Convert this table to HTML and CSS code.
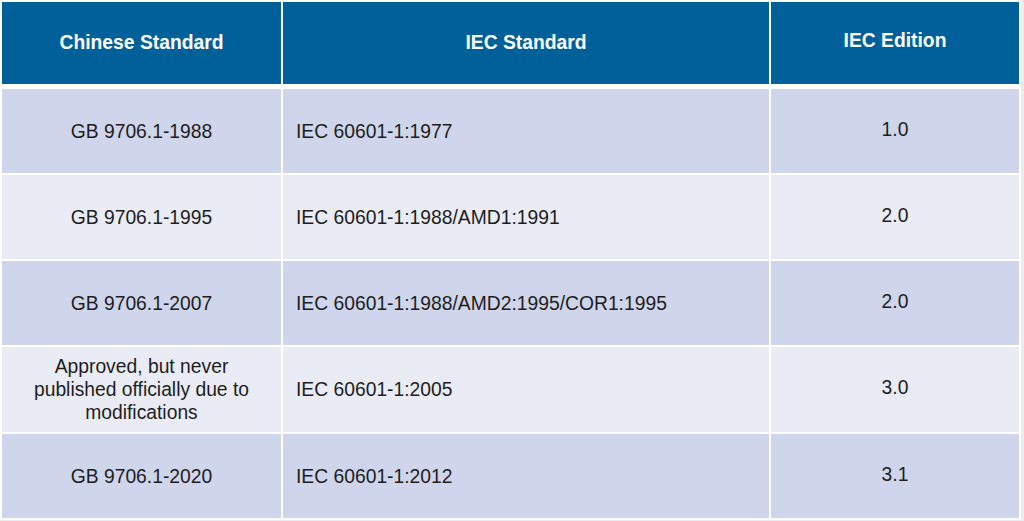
FILE: index.html
```html
<!DOCTYPE html>
<html>
<head>
<meta charset="utf-8">
<link rel="stylesheet" href="styles.css">
</head>
<body>
<div class="table">
  <div class="row head">
    <div class="cell c1">Chinese Standard</div>
    <div class="cell c2">IEC Standard</div>
    <div class="cell c3">IEC Edition</div>
  </div>
  <div class="body">
    <div class="row odd">
      <div class="cell c1">GB 9706.1-1988</div>
      <div class="cell c2">IEC 60601-1:1977</div>
      <div class="cell c3">1.0</div>
    </div>
    <div class="row even">
      <div class="cell c1">GB 9706.1-1995</div>
      <div class="cell c2">IEC 60601-1:1988/AMD1:1991</div>
      <div class="cell c3">2.0</div>
    </div>
    <div class="row odd">
      <div class="cell c1">GB 9706.1-2007</div>
      <div class="cell c2">IEC 60601-1:1988/AMD2:1995/COR1:1995</div>
      <div class="cell c3">2.0</div>
    </div>
    <div class="row even tall">
      <div class="cell c1">Approved, but never<br>published officially due to<br>modifications</div>
      <div class="cell c2">IEC 60601-1:2005</div>
      <div class="cell c3">3.0</div>
    </div>
    <div class="row odd">
      <div class="cell c1">GB 9706.1-2020</div>
      <div class="cell c2">IEC 60601-1:2012</div>
      <div class="cell c3">3.1</div>
    </div>
  </div>
</div>
</body>
</html>
```
FILE: styles.css
```css
html, body {
  margin: 0;
  padding: 0;
  background: #ececec;
  width: 1024px;
  height: 521px;
  overflow: hidden;
}
.table {
  width: 1017px;
  padding: 2px;
  background: #ffffff;
  display: flex;
  flex-direction: column;
  gap: 5px;
  font-family: "Liberation Sans", Arial, sans-serif;
  font-size: 19.3px;
}
.body {
  display: flex;
  flex-direction: column;
  gap: 2px;
}
.row {
  display: grid;
  grid-template-columns: 279px 486px 248px;
  column-gap: 2px;
  height: 84px;
}
.row.head { height: 82px; }
.row.tall { height: 85px; }
.cell {
  display: flex;
  align-items: center;
  justify-content: center;
  text-align: center;
  color: #1e1e1e;
  line-height: 23px;
}
.cell.c2 {
  justify-content: flex-start;
  padding-left: 13px;
}
.head .cell {
  background: #00609a;
  color: #ffffff;
  font-weight: bold;
  padding-bottom: 2px;
}
.head .cell.c2 { justify-content: center; padding-left: 0; }
.head .cell.c3 { padding-bottom: 6px; }
.odd .cell { background: #cfd5eb; }
.even .cell { background: #e9ebf5; }
.cell.c3 { padding-bottom: 4px; }
```
